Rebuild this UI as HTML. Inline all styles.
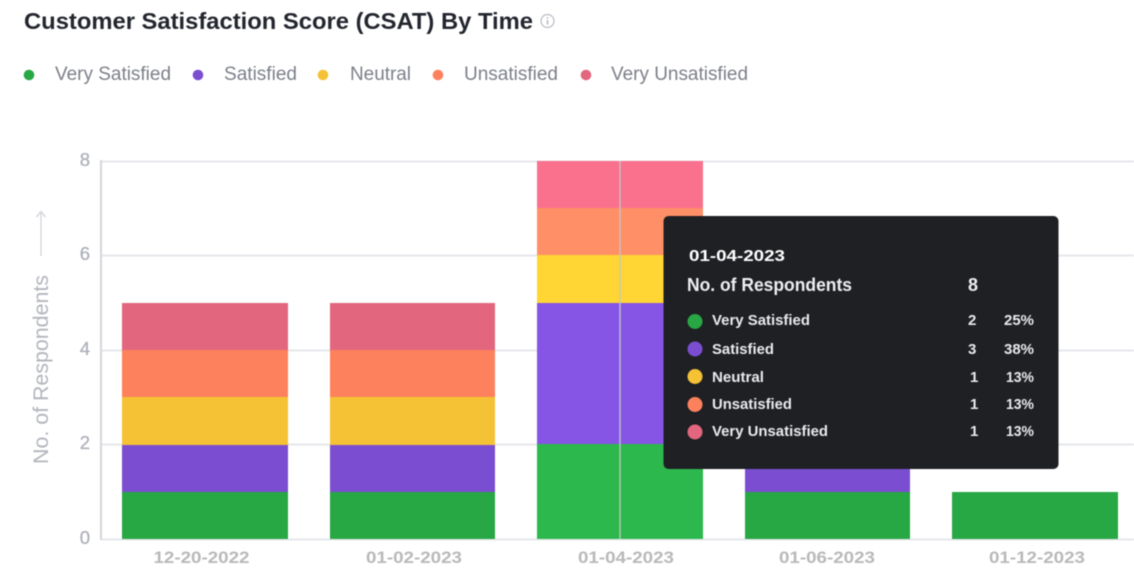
<!DOCTYPE html>
<html>
<head>
<meta charset="utf-8">
<style>
html,body{margin:0;padding:0;background:#fff;}
body{width:1134px;height:581px;overflow:hidden;position:relative;}
svg{display:block;filter:blur(0.5px);}
text{font-family:"Liberation Sans",sans-serif;}
</style>
</head>
<body>
<svg width="1134" height="581" viewBox="0 0 1134 581" xmlns="http://www.w3.org/2000/svg">
<rect width="1134" height="581" fill="#fff"/>
<text x="24" y="29" font-size="23.500" font-weight="700" fill="#23262e" textLength="509" lengthAdjust="spacingAndGlyphs">Customer Satisfaction Score (CSAT) By Time</text>
<circle cx="547.5" cy="21" r="6.5" fill="none" stroke="#b9bcc4" stroke-width="1.2"/>
<rect x="546.8" y="20" width="1.4" height="4.6" fill="#b0b3bb"/>
<rect x="546.8" y="17.2" width="1.4" height="1.5" fill="#b0b3bb"/>

<g font-size="19" fill="#7d808a">
<circle cx="29" cy="75" r="5.3" fill="#28a745"/>
<text x="55" y="80" textLength="116" lengthAdjust="spacingAndGlyphs">Very Satisfied</text>
<circle cx="198" cy="75" r="5.3" fill="#7a4dd1"/>
<text x="224" y="80" textLength="73" lengthAdjust="spacingAndGlyphs">Satisfied</text>
<circle cx="323" cy="75" r="5.3" fill="#f5c235"/>
<text x="350" y="80" textLength="61" lengthAdjust="spacingAndGlyphs">Neutral</text>
<circle cx="438" cy="75" r="5.3" fill="#fd815c"/>
<text x="464" y="80" textLength="94" lengthAdjust="spacingAndGlyphs">Unsatisfied</text>
<circle cx="586" cy="75" r="5.3" fill="#e1667e"/>
<text x="611" y="80" textLength="137" lengthAdjust="spacingAndGlyphs">Very Unsatisfied</text>
</g>

<!-- grid -->
<g stroke="#e6e7ea" stroke-width="2">
<line x1="101" y1="161.5" x2="1134" y2="161.5"/>
<line x1="101" y1="255.5" x2="1134" y2="255.5"/>
<line x1="101" y1="350.5" x2="1134" y2="350.5"/>
<line x1="101" y1="444.5" x2="1134" y2="444.5"/>
<line x1="101" y1="539.5" x2="1134" y2="539.5"/>
</g>
<line x1="101" y1="160" x2="101" y2="540" stroke="#d3d6db" stroke-width="2"/>

<g font-size="18.500" font-weight="400" fill="#aeb1ba" stroke="#aeb1ba" stroke-width="0.3" text-anchor="end">
<text x="90" y="166">8</text>
<text x="90" y="260">6</text>
<text x="90" y="355">4</text>
<text x="90" y="449">2</text>
<text x="90" y="544">0</text>
</g>

<text transform="translate(48,464) rotate(-90)" font-size="21" fill="#b3b6bd" textLength="189" lengthAdjust="spacingAndGlyphs">No. of Respondents</text>
<line x1="41" y1="256" x2="41" y2="212" stroke="#d5d7dc" stroke-width="1.4"/>
<path d="M36.5 217 L41 211.5 L45.500 217" fill="none" stroke="#d5d7dc" stroke-width="1.4"/>

<!-- bar 1 -->
<g>
<rect x="122" y="303" width="166" height="47" fill="#e1667e"/>
<rect x="122" y="350" width="166" height="47" fill="#fd815c"/>
<rect x="122" y="397" width="166" height="48" fill="#f5c235"/>
<rect x="122" y="445" width="166" height="47" fill="#7a4dd1"/>
<rect x="122" y="492" width="166" height="47" fill="#28a745"/>
</g>
<!-- bar 2 -->
<g>
<rect x="330" y="303" width="165" height="47" fill="#e1667e"/>
<rect x="330" y="350" width="165" height="47" fill="#fd815c"/>
<rect x="330" y="397" width="165" height="48" fill="#f5c235"/>
<rect x="330" y="445" width="165" height="47" fill="#7a4dd1"/>
<rect x="330" y="492" width="165" height="47" fill="#28a745"/>
</g>
<!-- bar 3 highlighted -->
<g>
<rect x="537" y="161" width="166" height="47" fill="#f9718d"/>
<rect x="537" y="208" width="166" height="47" fill="#ff8f66"/>
<rect x="537" y="255" width="166" height="48" fill="#ffd633"/>
<rect x="537" y="303" width="166" height="141" fill="#8655e6"/>
<rect x="537" y="444" width="166" height="95" fill="#2db84d"/>
<line x1="620" y1="161" x2="620" y2="539" stroke="#c4c6c4" stroke-width="1.3"/>
</g>
<!-- bar 4 -->
<g>
<rect x="745" y="444" width="165" height="48" fill="#7a4dd1"/>
<rect x="745" y="492" width="165" height="47" fill="#28a745"/>
</g>
<!-- bar 5 -->
<rect x="952" y="492" width="166" height="47" fill="#28a745"/>

<g font-size="16.500" font-weight="700" fill="#b9b9b9" text-anchor="middle">
<text x="201.500" y="563" textLength="96" lengthAdjust="spacingAndGlyphs">12-20-2022</text>
<text x="414" y="563" textLength="96" lengthAdjust="spacingAndGlyphs">01-02-2023</text>
<text x="626" y="563" textLength="96" lengthAdjust="spacingAndGlyphs">01-04-2023</text>
<text x="827" y="563" textLength="96" lengthAdjust="spacingAndGlyphs">01-06-2023</text>
<text x="1037" y="563" textLength="96" lengthAdjust="spacingAndGlyphs">01-12-2023</text>
</g>

<!-- tooltip -->
<rect x="663.500" y="216" width="395" height="253" rx="5" fill="#1f2024"/>
<text x="689" y="261" font-size="16" font-weight="700" fill="#fff" textLength="96" lengthAdjust="spacingAndGlyphs">01-04-2023</text>
<text x="687" y="291" font-size="18" font-weight="700" fill="#eceef0" textLength="165" lengthAdjust="spacingAndGlyphs">No. of Respondents</text>
<text x="968" y="291" font-size="18" font-weight="700" fill="#eceef0">8</text>

<g font-size="15" font-weight="700" fill="#e8eaec">
<circle cx="695" cy="321.500" r="7.500" fill="#28a745"/>
<text x="712" y="325" textLength="98" lengthAdjust="spacingAndGlyphs">Very Satisfied</text>
<text x="968" y="325">2</text>
<text x="1034" y="325" text-anchor="end" textLength="30" lengthAdjust="spacingAndGlyphs">25%</text>

<circle cx="695" cy="349" r="7.500" fill="#7a4dd1"/>
<text x="712" y="354" textLength="62" lengthAdjust="spacingAndGlyphs">Satisfied</text>
<text x="968" y="354">3</text>
<text x="1034" y="354" text-anchor="end" textLength="30" lengthAdjust="spacingAndGlyphs">38%</text>

<circle cx="695" cy="376.500" r="7.500" fill="#f5c235"/>
<text x="712" y="382" textLength="52" lengthAdjust="spacingAndGlyphs">Neutral</text>
<text x="970" y="382">1</text>
<text x="1034" y="382" text-anchor="end" textLength="28" lengthAdjust="spacingAndGlyphs">13%</text>

<circle cx="695" cy="404.500" r="7.500" fill="#fd815c"/>
<text x="712" y="409" textLength="80" lengthAdjust="spacingAndGlyphs">Unsatisfied</text>
<text x="970" y="409">1</text>
<text x="1034" y="409" text-anchor="end" textLength="28" lengthAdjust="spacingAndGlyphs">13%</text>

<circle cx="695" cy="432" r="7.500" fill="#e1667e"/>
<text x="712" y="436" textLength="116" lengthAdjust="spacingAndGlyphs">Very Unsatisfied</text>
<text x="970" y="436">1</text>
<text x="1034" y="436" text-anchor="end" textLength="28" lengthAdjust="spacingAndGlyphs">13%</text>
</g>
</svg>
</body>
</html>
